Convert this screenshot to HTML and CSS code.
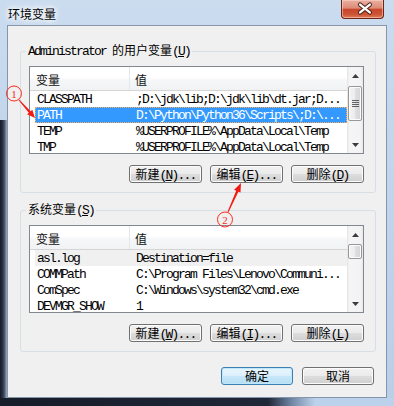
FILE: index.html
```html
<!DOCTYPE html>
<html lang="zh-CN">
<head>
  <meta charset="UTF-8">
  <meta name="viewport" content="width=device-width, initial-scale=1.0">
  <title>环境变量</title>
  <link rel="stylesheet" href="styles.css">
</head>
<body>
  <div class="window">
    <div class="titlebar">
      <span class="title">环境变量</span>
      <span class="close-btn">
        <svg width="43" height="19" viewBox="0 0 43 19">
          <path d="M18.5 5.5 L28.5 13.5 M28.5 5.5 L18.5 13.5" stroke="#4a1d14" stroke-width="4.4" stroke-linecap="round"/>
          <path d="M18.5 5.5 L28.5 13.5 M28.5 5.5 L18.5 13.5" stroke="#ffffff" stroke-width="2.4" stroke-linecap="round"/>
        </svg>
      </span>
    </div>

    <div class="client">
      <fieldset class="group group-user">
        <legend><span class="mono">Administrator </span>的用户变量<span class="mono">(<u>U</u>)</span></legend>
        <div class="list">
          <div class="list-body">
            <div class="list-header"><span>变量</span><span>值</span></div>
            <div class="row"><span>CLASSPATH</span><span>;D:\jdk\lib;D:\jdk\lib\dt.jar;D...</span></div>
            <div class="row selected"><span>PATH</span><span>D:\Python\Python36\Scripts\;D:\...</span></div>
            <div class="row"><span>TEMP</span><span>%USERPROFILE%\AppData\Local\Temp</span></div>
            <div class="row"><span>TMP</span><span>%USERPROFILE%\AppData\Local\Temp</span></div>
          </div>
          <div class="scrollbar">
            <div class="sb-btn"><svg width="7" height="4"><polygon points="3.5,0 7,4 0,4" fill="#3c3c3c"/></svg></div>
            <div class="sb-track">
              <div class="thumb thumb-long">
                <svg width="7" height="8"><path d="M0 0.5h7M0 2.5h7M0 4.5h7M0 6.5h7" stroke="#606060" stroke-width="1"/></svg>
              </div>
            </div>
            <div class="sb-btn"><svg width="7" height="4"><polygon points="0,0 7,0 3.5,4" fill="#3c3c3c"/></svg></div>
          </div>
        </div>
        <div class="btn-row">
          <button class="btn">新建<span class="mono">(<u>N</u>)...</span></button>
          <button class="btn">编辑<span class="mono">(<u>E</u>)...</span></button>
          <button class="btn">删除<span class="mono">(<u>D</u>)</span></button>
        </div>
      </fieldset>

      <fieldset class="group group-system">
        <legend>系统变量<span class="mono">(<u>S</u>)</span></legend>
        <div class="list">
          <div class="list-body">
            <div class="list-header"><span>变量</span><span>值</span></div>
            <div class="row inactive"><span>asl.log</span><span>Destination=file</span></div>
            <div class="row"><span>COMMPath</span><span>C:\Program Files\Lenovo\Communi...</span></div>
            <div class="row"><span>ComSpec</span><span>C:\Windows\system32\cmd.exe</span></div>
            <div class="row"><span>DEVMGR_SHOW</span><span>1</span></div>
          </div>
          <div class="scrollbar">
            <div class="sb-btn"><svg width="7" height="4"><polygon points="3.5,0 7,4 0,4" fill="#3c3c3c"/></svg></div>
            <div class="sb-track">
              <div class="thumb thumb-short"></div>
            </div>
            <div class="sb-btn"><svg width="7" height="4"><polygon points="0,0 7,0 3.5,4" fill="#3c3c3c"/></svg></div>
          </div>
        </div>
        <div class="btn-row">
          <button class="btn">新建<span class="mono">(<u>W</u>)...</span></button>
          <button class="btn">编辑<span class="mono">(<u>I</u>)...</span></button>
          <button class="btn">删除<span class="mono">(<u>L</u>)</span></button>
        </div>
      </fieldset>

      <div class="dialog-row">
        <button class="btn btn-default">确定</button>
        <button class="btn">取消</button>
      </div>
    </div>

    <!-- red annotations drawn over the dialog -->
    <svg class="marks" width="394" height="406" viewBox="0 0 394 406">
      <circle cx="14" cy="93.5" r="7.5" fill="none" stroke="#ff2a1a" stroke-width="1"/>
      <text x="14" y="97.5" class="mark-num">1</text>
      <polygon points="19.4,99.7 30.6,111.2 32.3,109.7 35,118 27.1,114.3 28.8,112.8 18.6,100.3" fill="#f01c14"/>

      <circle cx="225" cy="219.5" r="7.5" fill="none" stroke="#ff2a1a" stroke-width="1"/>
      <text x="225" y="223.5" class="mark-num">2</text>
      <polygon points="227.5,211.8 236.2,190.7 234.1,189.8 241,183 240.5,192.6 238.4,191.7 228.5,212.2" fill="#f01c14"/>
    </svg>
  </div>
</body>
</html>
```

FILE: styles.css
```css
body {
  margin: 0;
  font-family: "Noto Sans CJK SC", "Liberation Sans", sans-serif;
  font-size: 12px;
  color: #000;
}

/* Aero frame */
.window {
  position: relative;
  width: 394px;
  height: 406px;
  box-sizing: border-box;
  padding: 0 7px 8px 7px;
  display: flex;
  flex-direction: column;
  background:
    linear-gradient(to right, #161c28 0, #1f2738 68%, #6f86a4 74%, #bcd2ec 80%) 0 100% / 100% 8px no-repeat,
    linear-gradient(to right, #141a26 0, #2c3648 3px, #56657c 5px, #9fb2c9 7px) 0 120px / 7px 100% no-repeat,
    linear-gradient(to bottom, #cbdcef 0, #c3d6ec 30%, #b9cfe8 100%);
}

.titlebar {
  height: 29px;
  display: flex;
  align-items: flex-start;
}

.title {
  margin: 6px 0 0 1px;
  line-height: 16px;
  font-size: 12px;
  text-shadow: 0 0 4px #fff, 0 0 6px #fff, 0 0 8px #fff;
}

.close-btn {
  margin-left: auto;
  margin-right: 3px;
  width: 43px;
  height: 19px;
  box-sizing: border-box;
  border: 1px solid #6b2418;
  border-top: none;
  border-radius: 0 0 4px 4px;
  background: linear-gradient(#eab0a2 0%, #dc8b76 45%, #c8462a 52%, #cc5434 80%, #de7e5a 100%);
  box-shadow: inset 0 0 0 1px rgba(255, 220, 210, 0.5);
  display: flex;
  align-items: center;
  justify-content: center;
}

.close-btn svg {
  display: block;
  margin: -1px -1px 0 0;
}

/* dialog body */
.client {
  flex: 1;
  border: 1px solid #8596aa;
  background: #f0f0f0;
  padding: 0 12px 12px 12px;
  display: flex;
  flex-direction: column;
}

.mono {
  font-family: "Liberation Mono", monospace;
  font-size: 13px;
  letter-spacing: -1.8px;
}

u {
  text-underline-offset: 1px;
}

.group {
  width: 356px;
  box-sizing: border-box;
  min-width: 0;
  margin: 0;
  padding: 7px 11px 9px 8px;
  border: 1px solid #d5dfe5;
  border-radius: 3px;
}

.group-user {
  margin-top: 17px;
}

.group-system {
  margin-top: 9px;
}

.group legend {
  margin-left: -3px;
  padding: 0 2px;
  line-height: 14px;
  font-size: 12px;
}

/* list view */
.list {
  display: flex;
  height: 88px;
  box-sizing: border-box;
  border: 1px solid #828790;
  background: #fff;
}

.list-body {
  flex: 1;
  overflow: hidden;
}

.list-header {
  display: grid;
  grid-template-columns: 100px 1fr;
  height: 24px;
  box-sizing: border-box;
  border-bottom: 1px solid #d5d5d5;
  background: linear-gradient(#ffffff 0%, #ffffff 45%, #f6f7f9 55%, #f1f2f4 100%);
}

.list-header span {
  padding: 3px 0 0 6px;
  line-height: 20px;
  color: #111;
}

.list-header span:first-child {
  border-right: 1px solid #e3e6ea;
}

.list-header span + span {
  padding-left: 5px;
}

.row {
  display: grid;
  grid-template-columns: 95px 1fr;
  height: 16px;
  line-height: 17px;
  margin-left: 5px;
  font-family: "Liberation Mono", monospace;
  font-size: 13px;
  letter-spacing: -1.8px;
  white-space: nowrap;
  overflow: hidden;
}

.row span:first-child {
  padding-left: 2px;
}

.row span + span {
  padding-left: 6px;
}

.row.selected {
  background: #3399ff;
  color: #fff;
  outline: 1px dotted #ffae52;
  outline-offset: -1px;
}

.row.inactive {
  background: #f0f0f0;
}

/* scroll bar */
.scrollbar {
  width: 16px;
  display: flex;
  flex-direction: column;
  background: linear-gradient(to right, #e4e4e4 0, #f5f5f5 15%, #f3f3f3 85%, #e8e8e8 100%);
}

.sb-btn {
  height: 17px;
  display: flex;
  align-items: center;
  justify-content: center;
}

.sb-btn svg {
  display: block;
}

.sb-track {
  flex: 1;
}

.thumb {
  margin: 0 1px;
  box-sizing: border-box;
  border: 1px solid #979797;
  border-radius: 2px;
  background: linear-gradient(to right, #f4f4f4 0, #ececec 50%, #dfdfdf 50%, #d5d5d5 100%);
  box-shadow: inset 0 0 0 1px #fbfbfb;
  display: flex;
  align-items: center;
  justify-content: center;
}

.thumb svg {
  display: block;
}

.thumb-long {
  margin-top: 2px;
  height: 35px;
}

.thumb-short {
  margin-top: 1px;
  height: 15px;
}

/* buttons */
.btn-row {
  display: flex;
  justify-content: flex-end;
  gap: 8px;
  margin-top: 11px;
}

.btn {
  width: 73px;
  height: 18px;
  box-sizing: border-box;
  padding: 0;
  border: 1px solid #707070;
  border-radius: 3px;
  background: linear-gradient(#f2f2f2 0%, #ebebeb 48%, #dddddd 52%, #cfcfcf 100%);
  box-shadow: inset 0 0 0 1px #fcfcfc;
  font-family: "Noto Sans CJK SC", sans-serif;
  font-size: 12px;
  line-height: 16px;
  color: #000;
  white-space: nowrap;
}

.dialog-row {
  display: flex;
  justify-content: flex-end;
  gap: 9px;
  margin-top: 15px;
}

.dialog-row .btn {
  width: 72px;
}

.btn-default {
  border-color: #3c7fb1;
  background: linear-gradient(#e8f5fc 0%, #dcf0fb 48%, #c6e7f8 52%, #b6def4 100%);
  box-shadow: inset 0 0 0 1px #bfe6fa;
}

/* red annotations */
.marks {
  position: absolute;
  top: 0;
  left: 0;
  pointer-events: none;
}

.mark-num {
  font-family: "Liberation Serif", serif;
  font-size: 11px;
  fill: #ff2a1a;
  text-anchor: middle;
}
```
